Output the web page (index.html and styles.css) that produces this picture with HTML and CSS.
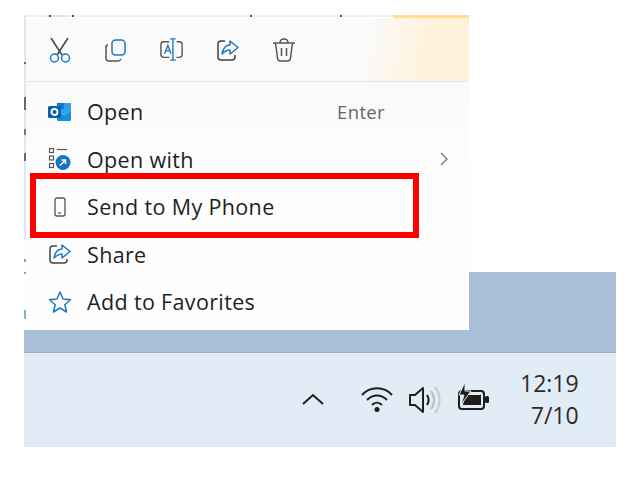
FILE: index.html
```html
<!DOCTYPE html>
<html>
<head>
    <title>Context menu</title>
    <link rel="stylesheet" href="styles.css">
</head>
<body>
    <div class="screen">
        <div class="doc">
            <div class="doc-line"></div>
            <div class="doc-accent"></div>
        </div>
        <div class="wallpaper"></div>
        <div class="taskbar">
            <svg class="tray-chevron" width="24" height="14" viewBox="0 0 24 14"><path d="M2 12 12 3l10 9" fill="none" stroke="#1d1d1d" stroke-width="2"/></svg>
            <svg class="tray-wifi" width="34" height="28" viewBox="0 0 34 28" fill="none" stroke="#1d1d1d" stroke-width="2"><path d="M2 10C10 1 24 1 32 10"/><path d="M7 15C13 9 21 9 27 15"/><path d="M12 20C15 17 19 17 22 20"/><circle cx="17" cy="24.500" r="2.500" fill="#1d1d1d" stroke="none"/></svg>
            <svg class="tray-sound" width="34" height="30" viewBox="0 0 34 30" fill="none" stroke-width="2"><path d="M2 10h5l8-7v24l-8-7H2z" stroke="#1d1d1d" stroke-linejoin="round"/><path d="M19 10c2 3 2 7 0 10" stroke="#1d1d1d"/><path d="M23 6c4 5 4 13 0 18" stroke="#bbbbbb"/><path d="M27 2c6 7 6 19 0 26" stroke="#c8c8c8"/></svg>
            <svg class="tray-battery" width="33" height="30" viewBox="0 0 33 30"><rect x="2" y="9" width="25" height="18" rx="3" fill="none" stroke="#1d1d1d" stroke-width="2"/><path d="M8 13h16v10H6z" fill="#1d1d1d"/><rect x="28" y="14" width="4" height="7" rx="1.500" fill="#1d1d1d"/><path d="M8 0 2 13h5l-3 10 10-14H8z" fill="#1d1d1d" stroke="#e2ecf7"/></svg>
            <div class="clock">
                <span>12:19</span>
                <span>7/10</span>
            </div>
        </div>
    </div>

    <div class="doc-edge"></div>

    <div class="menu">
        <div class="toolbar">
            <svg width="24" height="26" viewBox="0 0 24 26" fill="none" stroke-width="1.500"><path d="M3 1 14 18M20 1 9 18" stroke="#444"/><circle cx="6.500" cy="21" r="4" stroke="#1b78c4"/><circle cx="17.500" cy="21" r="4" stroke="#1b78c4"/></svg>
            <svg width="24" height="24" viewBox="0 0 24 24" fill="none" stroke-width="1.500"><path d="M4 7Q2 7 2 9v11q0 3 3 3h9q2 0 3-2" stroke="#555"/><rect x="8" y="2" width="13" height="15" rx="3.500" stroke="#1b78c4"/></svg>
            <svg width="24" height="24" viewBox="0 0 26 26" fill="none" stroke-width="1.500"><path d="M10 4H4Q1 4 1 7v11q0 3 3 3h6M18 4h3q3 0 3 3v11q0 3-3 3h-3" stroke="#555"/><path d="M11 1h6M14 1v23M11 24h6" stroke="#1b78c4"/><path d="M5 17 8.500 8 12 17M6.200 14H10.800" stroke="#1b78c4"/></svg>
            <svg width="24" height="24" viewBox="0 0 24 24" fill="none" stroke-width="1.500"><path d="M9 3H5Q2 3 2 6v13q0 3 3 3h11q3 0 3-3v-2" stroke="#444"/><path d="M14 3v4C9 7 7 11 6 16c3-3 5-4 8-4v4l8-6.500z" stroke="#1b78c4" stroke-linejoin="round"/></svg>
            <svg width="24" height="24" viewBox="0 0 24 24" fill="none" stroke="#555" stroke-width="1.500"><path d="M1 5h22M8 5q0-4 4-4t4 4M3.500 5l2 15q.3 3 3 3h7q2.700 0 3-3l2-15M9.500 10v8M14.500 10v8"/></svg>
        </div>
        <div class="items">
            <div class="item">
                <svg class="item-icon" width="24" height="20" viewBox="0 0 24 20"><path d="M9 1h14v8l-7 4-7-4z" fill="#28a8ea"/><path d="M9 1h7v6H9z" fill="#0f78d4"/><path d="M16 1h7v6h-7z" fill="#2f9fe8"/><path d="M9 9l7 4 7-4v9q0 1-1 1H10q-1 0-1-1z" fill="#1490df"/><rect x="0" y="4" width="13" height="12" rx="1.500" fill="#0f5ea8"/><circle cx="6.500" cy="10" r="3" fill="none" stroke="#fff" stroke-width="1.800"/></svg>
                <span class="label">Open</span>
                <span class="shortcut">Enter</span>
            </div>
            <div class="item">
                <svg class="item-icon" width="24" height="24" viewBox="0 0 24 24"><g fill="none" stroke="#555" stroke-width="1.200"><rect x="1.500" y="1.500" width="4" height="4"/><rect x="1.500" y="9" width="4" height="4"/><rect x="1.500" y="16.500" width="4" height="4"/><path d="M9 2.500h10"/></g><circle cx="15" cy="15.500" r="7.500" fill="#1277c4"/><path d="M12 18.500l5-5M13.500 13h4v4" fill="none" stroke="#fff" stroke-width="1.500"/></svg>
                <span class="label">Open with</span>
                <svg class="item-arrow" width="10" height="14" viewBox="0 0 10 14"><path d="M2 1l6 6-6 6" fill="none" stroke="#777" stroke-width="1.300"/></svg>
            </div>
            <div class="item">
                <svg class="item-icon" width="24" height="22" viewBox="0 0 24 22" fill="none" stroke="#555" stroke-width="1.300"><rect x="7" y="2" width="10" height="18" rx="2"/><path d="M10 17h3"/></svg>
                <span class="label">Send to My Phone</span>
            </div>
            <div class="item">
                <svg class="item-icon" width="24" height="22" viewBox="0 0 24 22" fill="none" stroke-width="1.500"><path d="M9 3H5Q2 3 2 6v11q0 3 3 3h11q3 0 3-3v-1" stroke="#444"/><path d="M14 2v4C9 6 7 10 6 15c3-3 5-4 8-4v4l8-6.500z" stroke="#1b78c4" stroke-linejoin="round"/></svg>
                <span class="label">Share</span>
            </div>
            <div class="item">
                <svg class="item-icon" width="24" height="24" viewBox="0 0 24 24"><path d="M12 2l3 7 7.500.7-5.700 5 1.800 7.300L12 18l-6.600 4 1.800-7.300-5.700-5L9 9z" fill="none" stroke="#1b78c4" stroke-width="1.500" stroke-linejoin="round"/></svg>
                <span class="label">Add to Favorites</span>
            </div>
        </div>
    </div>

    <div class="highlight"></div>
</body>
</html>
```

FILE: styles.css
```css
body {
    margin: 0;
    background: #fff;
    font-family: "Open Sans", "Noto Sans", sans-serif;
    color: #1f1f1f;
}
.screen {
    width: 592px;
    margin-left: 24px;
    padding-top: 15px;
}
.doc {
    height: 257px;
    display: flex;
}
.doc-line {
    width: 369px;
    height: 2px;
    background:
        linear-gradient(#555, #555) 25px 0 / 2px 2px no-repeat,
        linear-gradient(#555, #555) 48px 0 / 2px 2px no-repeat,
        linear-gradient(#555, #555) 226px 0 / 2px 2px no-repeat,
        linear-gradient(#555, #555) 316px 0 / 2px 2px no-repeat,
        linear-gradient(#d6e6f8, #d6e6f8) 27px 0 / 16px 2px no-repeat,
        #f0f0f0;
}
.doc-accent {
    width: 76px;
    height: 3px;
    background: #ffdd8a;
}
.wallpaper {
    height: 80px;
    background: #a9bfd7;
    border-bottom: 1px solid #a9aeb8;
}
.taskbar {
    height: 94px;
    background: #e2ecf7;
    display: flex;
    align-items: center;
    box-sizing: border-box;
    padding-left: 277px;
}
.tray-chevron {
    margin-top: -2px;
}
.tray-wifi {
    margin-left: 35px;
    margin-top: -2px;
}
.tray-sound {
    margin-left: 14px;
}
.tray-battery {
    margin-left: 15px;
    margin-top: -7px;
}
.clock {
    margin-left: 30px;
    display: flex;
    flex-direction: column;
    align-items: flex-end;
    font-size: 23px;
    line-height: 32px;
    color: #2b2b2b;
    margin-top: -3px;
}

/* strip of the window behind the menu */
.doc-edge {
    position: absolute;
    left: 24px;
    top: 15px;
    width: 2px;
    height: 315px;
    background:
        linear-gradient(#667, #667) 0 47px / 2px 2px no-repeat,
        linear-gradient(#667, #667) 0 82px / 2px 13px no-repeat,
        linear-gradient(#778, #778) 0 114px / 2px 6px no-repeat,
        linear-gradient(#667, #667) 0 138px / 2px 8px no-repeat,
        linear-gradient(#999, #999) 0 244px / 2px 3px no-repeat,
        linear-gradient(#999, #999) 0 257px / 2px 2px no-repeat,
        linear-gradient(#7fbf9a, #7fbf9a) 0 295px / 2px 9px no-repeat,
        linear-gradient(#dde8f4 0, #dde8f4 225px, #fff 225px);
}

/* context menu */
.menu {
    position: absolute;
    left: 26px;
    top: 18px;
    width: 443px;
    height: 312px;
    border-radius: 10px 0 0 0;
    background:
        linear-gradient(100deg, #fafafa 0%, #fafafa 76%, #fff3df 88%, #fff1d8 100%) top / 100% 63px no-repeat,
        linear-gradient(180deg, #f6f6f6 0%, #fdfdfd 45%, #fefefe 100%);
}
.toolbar {
    height: 63px;
    border-bottom: 1px solid #e4e4e4;
    display: flex;
    align-items: center;
    gap: 32px;
    padding-left: 22px;
}
.items {
    display: flex;
    flex-direction: column;
    padding-top: 6px;
}
.item {
    height: 47.500px;
    display: flex;
    align-items: center;
    padding-left: 22px;
    font-size: 21.500px;
    letter-spacing: 0.350px;
}
.item-icon {
    flex: none;
}
.label {
    margin-left: 15px;
}
.shortcut {
    margin-left: auto;
    margin-right: 84px;
    font-size: 18.500px;
    color: #666;
}
.item-arrow {
    margin-left: auto;
    margin-right: 20px;
}
.highlight {
    position: absolute;
    left: 30px;
    top: 173px;
    width: 377px;
    height: 53px;
    border: 6px solid #ff0000;
}
```
